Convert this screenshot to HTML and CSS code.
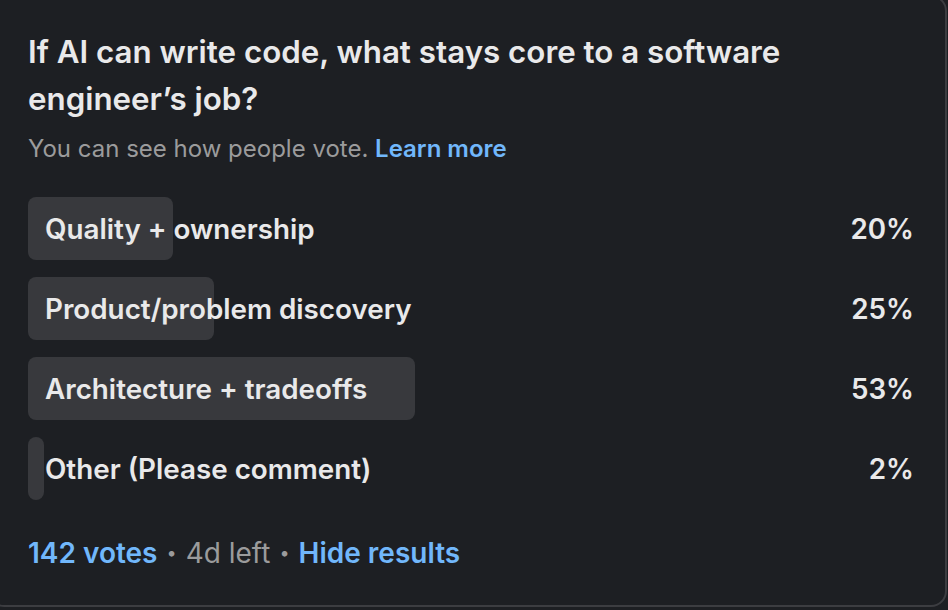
FILE: index.html
```html
<!DOCTYPE html>
<html lang="en">
<head>
<meta charset="utf-8">
<title>Poll</title>
<link rel="stylesheet" href="styles.css">
</head>
<body>
<div class="card">
  <h1 class="question">If AI can write code, what stays core to a software engineer’s job?</h1>
  <p class="note">You can see how people vote. <a class="link" href="#">Learn more</a></p>
  <ul class="options">
    <li class="option">
      <div class="fill" style="width:16.4%"></div>
      <span class="label">Quality + ownership</span>
      <span class="pct">20%</span>
    </li>
    <li class="option">
      <div class="fill" style="width:21%"></div>
      <span class="label">Product/problem discovery</span>
      <span class="pct">25%</span>
    </li>
    <li class="option">
      <div class="fill" style="width:43.7%"></div>
      <span class="label">Architecture + tradeoffs</span>
      <span class="pct">53%</span>
    </li>
    <li class="option">
      <div class="fill" style="width:1.8%"></div>
      <span class="label">Other (Please comment)</span>
      <span class="pct">2%</span>
    </li>
  </ul>
  <div class="footer">
    <a class="link" href="#">142 votes</a>
    <span class="dot">•</span>
    <span class="muted">4d left</span>
    <span class="dot">•</span>
    <a class="link" href="#">Hide results</a>
  </div>
</div>
</body>
</html>
```
FILE: styles.css
```css
* { box-sizing: border-box; }
html, body {
  margin: 0;
  padding: 0;
  background: #1d1f23;
  overflow: hidden;
}
body {
  font-family: Inter, "Liberation Sans", sans-serif;
  color: #e9e9ea;
}
.card {
  margin: -5px 0 0 -12px;
  width: 959px;
  height: 612px;
  border: 2px solid #3c3d41;
  border-radius: 16px;
  background: #1d1f23;
  padding: 32px 31px 0 38px;
}
.question {
  margin: 0;
  font-size: 31.3px;
  line-height: 47px;
  font-weight: 600;
  max-width: 800px;
  letter-spacing: 0;
}
.note {
  margin: 11px 0 0;
  font-size: 24px;
  line-height: 30px;
  color: #9b9b9c;
}
.link {
  color: #71b7fb;
  font-weight: 600;
  text-decoration: none;
}
.options {
  list-style: none;
  margin: 33px 0 0;
  padding: 0;
  display: flex;
  flex-direction: column;
  gap: 17px;
}
.option {
  display: grid;
  grid-template-columns: 1fr auto;
  align-items: center;
  height: 63px;
  font-size: 27.8px;
  font-weight: 600;
}
.fill {
  grid-area: 1 / 1 / 2 / 3;
  height: 63px;
  background: #38393d;
  border-radius: 8px;
  min-width: 16px;
}
.label {
  grid-area: 1 / 1;
  padding-left: 17px;
  z-index: 1;
}
.pct {
  grid-area: 1 / 2;
}
.footer {
  margin-top: 36px;
  font-size: 28px;
  line-height: 34px;
  display: flex;
  align-items: center;
  gap: 9px;
}
.dot {
  color: #9b9b9c;
  font-size: 18px;
}
.muted {
  color: #9b9b9c;
}
```
